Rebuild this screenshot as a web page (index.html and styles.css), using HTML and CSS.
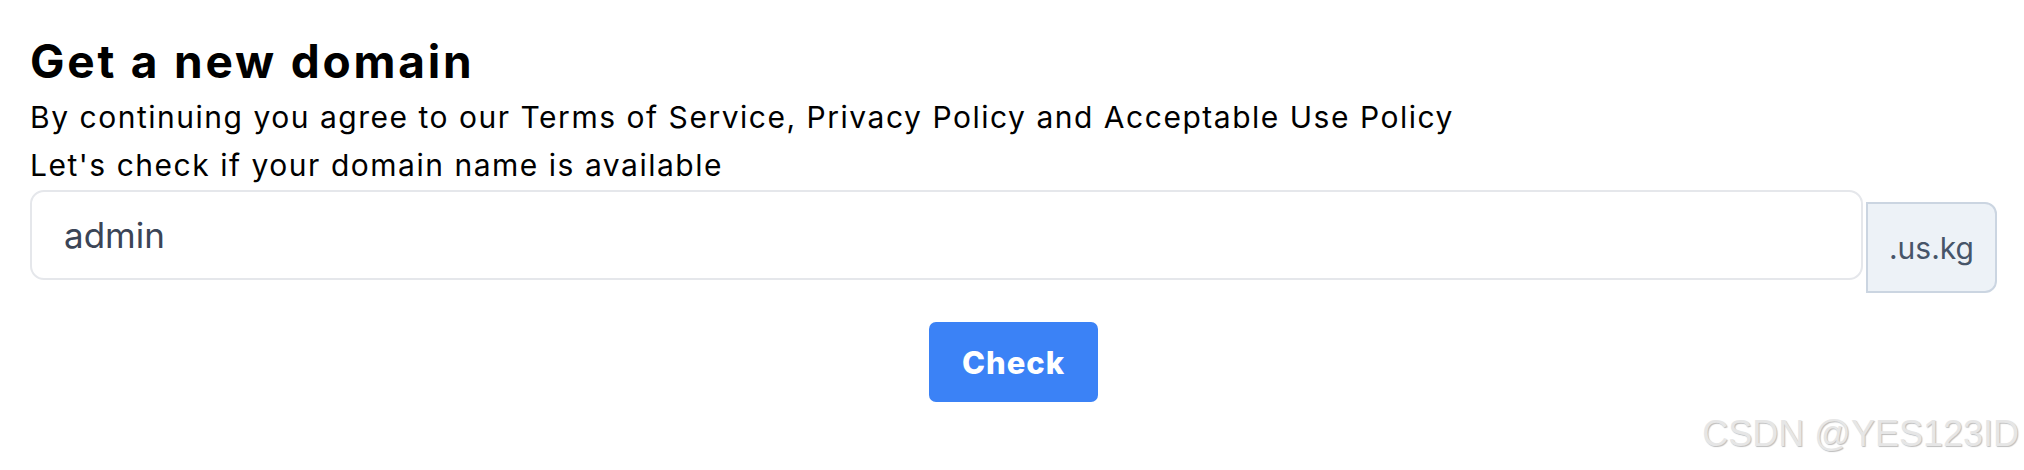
FILE: index.html
```html
<!DOCTYPE html>
<html lang="en">
<head>
<meta charset="utf-8">
<title>Get a new domain</title>
<link rel="stylesheet" href="styles.css">
</head>
<body>
<main class="page">
  <h1 class="title">Get a new domain</h1>
  <p class="line">By continuing you agree to our Terms of Service, Privacy Policy and Acceptable Use Policy</p>
  <p class="line">Let's check if your domain name is available</p>
  <div class="row">
    <div class="field"><span class="value">admin</span></div>
    <div class="suffix"><span>.us.kg</span></div>
  </div>
  <div class="actions">
    <button class="btn" type="button">Check</button>
  </div>
  <div class="watermark">CSDN @YES123ID</div>
</main>
</body>
</html>
```
FILE: styles.css
```css
html, body { margin: 0; padding: 0; background: #fff; }
body { font-family: Inter, "Noto Sans", sans-serif; color: #000; }
.page { box-sizing: border-box; height: 470px; overflow: hidden; padding: 33px 27px 0 30px; position: relative; }
.title { margin: 0 0 4px; font-size: 46px; font-weight: 700; line-height: 56px; letter-spacing: 2.8px; }
.line { margin: 0; font-size: 30px; line-height: 48px; letter-spacing: 1.52px; }
.row { display: flex; margin-top: 1px; }
.field { flex: 1; height: 86px; border: 2px solid #e5e7eb; border-radius: 14px; display: flex; align-items: center; padding-left: 32px; }
.value { font-size: 35px; color: #3b4556; }
.suffix { margin-left: 3px; margin-top: 12px; width: 127px; height: 87px; background: #edf2f7; border: 2px solid #cbd5e1; border-radius: 0 12px 12px 0; display: flex; align-items: center; justify-content: center; font-size: 30px; color: #475569; }
.actions { display: flex; justify-content: center; margin-top: 29px; margin-left: -27px; margin-right: -27px; }
.btn { width: 169px; height: 80px; padding: 0; border: 0; border-radius: 7px; background: #3b82f6; color: #fff; font-family: inherit; font-size: 31px; font-weight: 800; letter-spacing: 1px; }
.watermark { position: absolute; right: 5px; bottom: 15px; font-family: "Liberation Sans", Arial, sans-serif; font-size: 36px; color: #e6e6e6; text-shadow: 1px 1px 1px #bdbdbd; }
```
